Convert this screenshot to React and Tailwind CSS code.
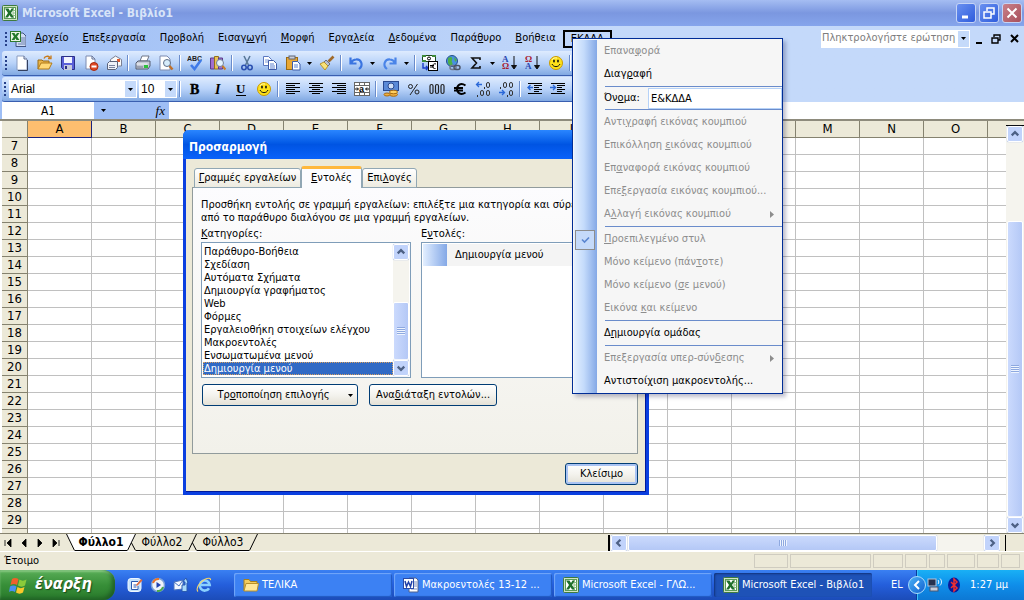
import React from "react";

/* Text with an underlined access key: the letter after "_" is underlined. */
function Key({ t }) {
  const i = t.indexOf("_");
  if (i < 0) return <span>{t}</span>;
  return (
    <span>
      {t.slice(0, i)}
      <span className="underline underline-offset-1">{t[i + 1]}</span>
      {t.slice(i + 2)}
    </span>
  );
}

const ICONS = {
  new: (
    <>
      <path d="M3 1h7l3 3v11H3z" fill="#fff" stroke="#8a9cc0" />
      <path d="M10 1v3h3" fill="#dfe8f8" stroke="#5a6a90" />
      <path d="M13.5 5v10.5H4" fill="none" stroke="#33405f" />
    </>
  ),
  open: (
    <>
      <path d="M1 14V5h4l1 1h6v3" fill="#e9b54a" stroke="#9a6a14" />
      <path d="M1 14l3-6h11l-3 6z" fill="#ffd977" stroke="#b07a1a" />
      <path d="M7 3.500c1-2.500 4-3 6-1M14 0.500v3h-3" fill="none" stroke="#c87a1a" strokeWidth="1.300" />
    </>
  ),
  save: (
    <>
      <path d="M1.500 1.500h13v13h-11l-2-2z" fill="#5a5fd8" stroke="#2b2f86" />
      <rect x="4" y="2" width="8" height="6" fill="#f2f4ff" />
      <rect x="4" y="10" width="8" height="5" fill="#c7cbdc" />
      <rect x="5" y="11" width="2" height="3" fill="#2b2f86" />
    </>
  ),
  perm: (
    <>
      <path d="M3 1h6l3 3v10H3z" fill="#fff" stroke="#7d8bb0" />
      <path d="M9 1v3h3" fill="none" stroke="#5a6a90" />
      <circle cx="11" cy="11.500" r="4" fill="#e04a26" stroke="#a82a10" />
      <rect x="8.500" y="10.500" width="5" height="2" fill="#fff" />
    </>
  ),
  mail: (
    <>
      <path d="M4.500 15V4.500l5-3.500 6 3.500V11h-3" fill="#fafafa" stroke="#7a7f92" />
      <path d="M11 4h3v3h-3z" fill="#e0562a" />
      <path d="M1.500 8.500l2-2h8v6l-2 2h-8z" fill="#eef1f8" stroke="#5b637a" />
      <path d="M3 10.500h6M3 12.500h6" stroke="#7a84a0" />
    </>
  ),
  print: (
    <>
      <path d="M5 6l2-5h7l-2 5z" fill="#fff" stroke="#6f7688" />
      <path d="M1 8l2-2h12v5l-2 3H1z" fill="#c3c8d4" stroke="#555c6e" />
      <path d="M1.500 9h11" stroke="#f7f8fb" />
      <rect x="9" y="10" width="4" height="3" fill="#2dc03a" />
      <path d="M2 12h6" stroke="#70778a" />
    </>
  ),
  preview: (
    <>
      <path d="M2 1h7l3 3v11H2z" fill="#fff" stroke="#7d8bb0" />
      <circle cx="9" cy="8" r="3.500" fill="#d6ecfb" stroke="#5f6f88" />
      <path d="M11.500 11l3 3.500" stroke="#c0702a" strokeWidth="2.400" />
    </>
  ),
  spell: (
    <>
      <text x="0" y="6" fontSize="7" fontWeight="700" fontFamily="Liberation Sans, sans-serif" fill="#222">ABC</text>
      <path d="M4 10l3.500 4L14 5" fill="none" stroke="#3f7ae8" strokeWidth="2.600" />
    </>
  ),
  research: (
    <>
      <path d="M0.500 3h4v11h-4z" fill="#a070d0" stroke="#5c3a8a" />
      <path d="M4.500 1.500h4v12.500h-4z" fill="#e9c35a" stroke="#94721a" />
      <path d="M8.500 3h4v11h-4z" fill="#a070d0" stroke="#5c3a8a" />
      <circle cx="10" cy="8" r="3.500" fill="#e3f2fd" stroke="#6f7f98" />
      <path d="M12.500 11l3 3.500" stroke="#c9802a" strokeWidth="2.200" />
    </>
  ),
  cut: (
    <>
      <path d="M5 1l4.500 9M11 1L6.500 10" stroke="#5b7a9a" strokeWidth="1.600" fill="none" />
      <circle cx="5" cy="12.500" r="2.200" fill="none" stroke="#2b50b0" strokeWidth="1.600" />
      <circle cx="11" cy="12.500" r="2.200" fill="none" stroke="#2b50b0" strokeWidth="1.600" />
    </>
  ),
  copy: (
    <>
      <path d="M1.500 1.500h5l3 3v6h-8z" fill="#fff" stroke="#5c78c0" />
      <path d="M3 5h4M3 7h4" stroke="#7c98d8" />
      <path d="M6.500 5.500h5l3 3v6h-8z" fill="#fff" stroke="#3f5ca8" />
      <path d="M8 9h4M8 11h5M8 13h5" stroke="#5c80d0" />
    </>
  ),
  paste: (
    <>
      <rect x="1.500" y="2.500" width="11" height="12" fill="#e8a735" stroke="#9a6a14" />
      <rect x="4" y="1" width="6" height="3" fill="#c9cdd8" stroke="#5e6474" />
      <path d="M7.500 6.500h5l2.500 2.500v6H7.500z" fill="#fff" stroke="#3f5ca8" />
      <path d="M9 10h4M9 12h4" stroke="#5c80d0" />
    </>
  ),
  brush: (
    <>
      <path d="M14.500 1.500l-5 5" stroke="#a06a2a" strokeWidth="2.600" />
      <path d="M7 5l4 4-2 2-4-4z" fill="#b9bfd0" stroke="#6a7085" />
      <path d="M5 7l4 4-3 4L1 9z" fill="#f8e27a" stroke="#b8922a" />
    </>
  ),
  undo: <path d="M11 14c5-4 2-10-3-9.500C5.500 4.500 4 6 3 8M2.500 2.500V8.500h6" fill="none" stroke="#3a74e0" strokeWidth="2.200" />,
  redo: <path d="M5 14C0 10 3 4 8 4.500c2.500 0 4 1.500 5 3.500M13.500 2.500V8.500h-6" fill="none" stroke="#4a84e8" strokeWidth="2.200" />,
  euroconv: (
    <>
      <rect x="0.500" y="0.500" width="13" height="6" fill="#fff" stroke="#1c4a1c" />
      <path d="M0 0h4v2H0zM10 0h4v2h-4zM0 5h4v2H0z" fill="#3f8a3a" />
      <circle cx="7" cy="3.500" r="1.500" fill="none" stroke="#000" />
      <path d="M1 8v5h4M4 11l2 2-2 2" stroke="#1a3cc8" fill="none" strokeWidth="1.400" />
      <rect x="6.500" y="6.500" width="9" height="9" fill="#fff" stroke="#000" />
      <path d="M14 9c-4-1.500-5 5-0.500 4.500M8 10.500h4M8 12h4" stroke="#000" fill="none" />
    </>
  ),
  link: (
    <>
      <circle cx="7" cy="6" r="5.500" fill="#4a90e0" stroke="#24508a" />
      <path d="M3 3c3-2 5-1 4 2s2 3 0 5-4-1-4-3zM9 2l3 3-2 2z" fill="#4cb04a" />
      <rect x="5" y="10.500" width="6" height="4" rx="2" fill="none" stroke="#70788c" strokeWidth="1.500" />
      <rect x="9" y="10.500" width="6" height="4" rx="2" fill="none" stroke="#4c5468" strokeWidth="1.500" />
    </>
  ),
  sum: <path d="M12 5V3H4l4.500 5L4 13h8v-2" fill="none" stroke="#111" strokeWidth="1.600" />,
  sortasc: (
    <>
      <text x="0" y="7" fontSize="9" fontWeight="700" fontFamily="Liberation Serif, serif" fill="#2a48b0">A</text>
      <text x="0" y="14" fontSize="9" fontWeight="700" fontFamily="Liberation Serif, serif" fill="#a82030">Ω</text>
      <path d="M12 1v12M9.500 10.500L12 14l2.500-3.500z" stroke="#111" fill="#111" />
    </>
  ),
  sortdesc: (
    <>
      <text x="0" y="7" fontSize="9" fontWeight="700" fontFamily="Liberation Serif, serif" fill="#a82030">Ω</text>
      <text x="0" y="14" fontSize="9" fontWeight="700" fontFamily="Liberation Serif, serif" fill="#2a48b0">A</text>
      <path d="M12 1v12M9.500 10.500L12 14l2.500-3.500z" stroke="#111" fill="#111" />
    </>
  ),
  smile: (
    <>
      <circle cx="8" cy="8" r="6.500" fill="#ffe21a" stroke="#c99a00" />
      <path d="M4 5c1-2 3-2.500 5-2" stroke="#fff9b0" fill="none" />
      <ellipse cx="6" cy="6" rx="0.900" ry="1.500" fill="#111" />
      <ellipse cx="10" cy="6" rx="0.900" ry="1.500" fill="#111" />
      <path d="M4 9c1.500 3.500 6.500 3.500 8 0" fill="none" stroke="#111" />
    </>
  ),
  bold: <text x="3" y="13" fontSize="14" fontWeight="700" fontFamily="Liberation Serif, serif" stroke="#000" strokeWidth="0.400">B</text>,
  italic: <text x="5" y="13" fontSize="14" fontWeight="700" fontStyle="italic" fontFamily="Liberation Serif, serif">I</text>,
  under: (
    <>
      <text x="3" y="12" fontSize="13" fontWeight="700" fontFamily="Liberation Serif, serif">U</text>
      <path d="M3 14.500h10" stroke="#000" />
    </>
  ),
  left: <path d="M1 2.500h14M1 4.500h9M1 6.500h14M1 8.500h9M1 10.500h14M1 12.500h9" stroke="#000" />,
  center: <path d="M1 2.500h14M4 4.500h8M1 6.500h14M4 8.500h8M1 10.500h14M4 12.500h8" stroke="#000" />,
  right: <path d="M1 2.500h14M6 4.500h9M1 6.500h14M6 8.500h9M1 10.500h14M6 12.500h9" stroke="#000" />,
  merge: (
    <>
      <rect x="0.500" y="1.500" width="15" height="13" fill="#fff" stroke="#666" />
      <path d="M0 4.500h16M0 11.500h16M5.500 1v3M10.500 1v3M5.500 12v3M10.500 12v3" stroke="#666" />
      <path d="M1 8h3M15 8h-3M3 6.500L4.500 8 3 9.500M13 6.500L11.500 8 13 9.500" stroke="#000" fill="none" />
      <text x="5" y="10.500" fontSize="9" fontWeight="700" fontFamily="Liberation Sans, sans-serif">a</text>
    </>
  ),
  currency: (
    <>
      <rect x="0.500" y="0.500" width="15" height="9" fill="#5a8ad8" stroke="#2a4a90" />
      <circle cx="8" cy="5" r="3" fill="#cfe0f8" stroke="#2a4a90" />
      <ellipse cx="10.500" cy="13.500" rx="4" ry="1.800" fill="#f0b040" stroke="#a86a10" />
      <ellipse cx="10.500" cy="11" rx="4" ry="1.800" fill="#ffd060" stroke="#a86a10" />
      <ellipse cx="4" cy="13.500" rx="3" ry="1.500" fill="#f0b040" stroke="#a86a10" />
    </>
  ),
  percent: (
    <>
      <circle cx="4.500" cy="5.500" r="2" fill="none" stroke="#222" />
      <circle cx="11" cy="11" r="2" fill="none" stroke="#222" />
      <path d="M11.500 3l-7.500 11" stroke="#222" />
    </>
  ),
  thousands: (
    <g fill="none" stroke="#222" strokeWidth="1.200">
      <rect x="1" y="3.500" width="3" height="9" rx="1.500" />
      <rect x="6.500" y="3.500" width="3" height="9" rx="1.500" />
      <rect x="12" y="3.500" width="3" height="9" rx="1.500" />
    </g>
  ),
  euro: <path d="M13.500 4.500c-5-3.500-8.500 0-8.500 3.500s3.500 7 8.500 3.500M2 7h9M2 9.500h9" fill="none" stroke="#000" strokeWidth="2" />,
  incdec: (
    <>
      <path d="M7 3.500H2M4 1L1.500 3.500 4 6" fill="none" stroke="#2a68d8" strokeWidth="1.300" />
      <g fill="none" stroke="#333"><path d="M9.500 6v2" /><rect x="11.500" y="1.500" width="3" height="5" rx="1.500" /><path d="M2.500 14v2" /><rect x="5.500" y="9.500" width="3" height="5" rx="1.500" /><rect x="11.500" y="9.500" width="3" height="5" rx="1.500" /></g>
    </>
  ),
  decdec: (
    <>
      <path d="M1 11.500h5M4 9l2.500 2.500L4 14" fill="none" stroke="#2a68d8" strokeWidth="1.300" />
      <g fill="none" stroke="#333"><path d="M2.500 6v2" /><rect x="5.500" y="1.500" width="3" height="5" rx="1.500" /><rect x="11.500" y="1.500" width="3" height="5" rx="1.500" /><path d="M9.500 14v2" /><rect x="11.500" y="9.500" width="3" height="5" rx="1.500" /></g>
    </>
  ),
  outdent: (
    <>
      <path d="M1 2.500h14M7 4.500h8M7 6.500h5M7 8.500h8M7 10.500h5M1 12.500h14" stroke="#000" />
      <path d="M6 6.500H1M3.500 4L1 6.500 3.500 9" fill="none" stroke="#2a68d8" strokeWidth="1.400" />
    </>
  ),
  indent: (
    <>
      <path d="M1 2.500h14M7 4.500h8M7 6.500h5M7 8.500h8M7 10.500h5M1 12.500h14" stroke="#000" />
      <path d="M0 6.500h5M3 4l2.500 2.500L3 9" fill="none" stroke="#2a68d8" strokeWidth="1.400" />
    </>
  ),
  excel: (
    <>
      <rect x="0.500" y="0.500" width="15" height="15" rx="1" fill="#cfe3c2" stroke="#3f7a3f" />
      <rect x="2.500" y="2.500" width="11" height="11" fill="#fff" stroke="#5a9a55" />
      <path d="M11 3v10M11 5.500h2.500M11 8h2.500M11 10.500h2.500" stroke="#8cbf84" />
      <path d="M3 3.500h3.500L8 6l1.500-2.500H12L9 8l3 4.500H9L7.500 10 6 12.500H3L6 8z" fill="#1f6f2a" />
    </>
  ),
  exceldoc: (
    <>
      <path d="M6 2h7l3 3v10.500H6z" fill="#cfdcf4" stroke="#3f5280" />
      <path d="M11 7h4M11 9h4M11 11h4M8 13h7" stroke="#6d80ad" />
      <rect x="0.500" y="0.500" width="10" height="10" fill="#e9f5e4" stroke="#2f7a2f" />
      <path d="M1.500 2h3l1 2 1.500-2H9.500L7 5.500l2.500 3.500h-3l-1-1.800L4.500 9h-3L4 5.500z" fill="#237a2a" />
    </>
  ),
  word: (
    <>
      <path d="M6 1h7l2 2v12H6z" fill="#fff" stroke="#4f6290" />
      <path d="M11 5h3M11 7h3M11 9h3M8 12h6" stroke="#7d90bd" />
      <rect x="0.500" y="1.500" width="10" height="10" fill="#fff" stroke="#2a4aa8" />
      <path d="M2 4l1.500 5.500L5.500 5l2 4.500L9 4" fill="none" stroke="#1f3fa8" strokeWidth="1.500" />
    </>
  ),
  folder: (
    <>
      <path d="M1 14V2.500h5l1.500 2H14V7" fill="#f2cc60" stroke="#a8801a" />
      <path d="M1 14L3 6.500h12.500L14 14z" fill="#ffe89a" stroke="#b8902a" />
    </>
  ),
  desktop: (
    <>
      <rect x="1" y="1.500" width="13" height="13" rx="3" fill="#c4e2fb" stroke="#eef7ff" />
      <path d="M11 4.500H4.500v8H11V9" fill="#fff" stroke="#2a5ab0" />
      <path d="M6.500 8h3M6.500 10h3" stroke="#2a5ab0" />
      <path d="M9 8l5-6 1.500 1.500L10 9z" fill="#e06a3a" />
    </>
  ),
  media: (
    <>
      <circle cx="8" cy="8" r="6.500" fill="#eef4fb" stroke="#7aa0d8" strokeWidth="1.500" />
      <path d="M3 6a6 6 0 0 1 6-4" stroke="#e8732a" strokeWidth="2" fill="none" />
      <path d="M13 10a6 6 0 0 1-6 4" stroke="#4aa84a" strokeWidth="2" fill="none" />
      <path d="M6.500 5v6l4.500-3z" fill="#1f3fb0" />
    </>
  ),
  outlook: (
    <>
      <path d="M1 5l9-2v9l-9 1z" fill="#f2f7ff" stroke="#4a74c0" />
      <path d="M1 5l5 4 4-6" fill="none" stroke="#4a74c0" />
      <path d="M9 14.500V8h3V5l-2-.5L13 1l2 4.500L14 6v8.500z" fill="#a8d8fa" stroke="#2a5ab0" />
    </>
  ),
  ie: (
    <>
      <path d="M13 11.200a5 5 0 1 1 .7-3.200H4.500" fill="none" stroke="#8ad0ff" strokeWidth="2.600" />
      <path d="M2 14.500C-.5 12 3 5 9 2.200c3-1.400 6-1.500 5.500 1" fill="none" stroke="#f8d468" strokeWidth="1.100" />
    </>
  ),
  net: (
    <>
      <rect x="1" y="2" width="8" height="7" fill="#26324f" stroke="#b8c4da" />
      <rect x="3" y="10" width="8" height="4" fill="#c8cfdc" stroke="#4b5670" />
      <path d="M11 3c1 1 1 3 0 4M13 1.500c2 2 2 5 0 7" fill="none" stroke="#e8f6ff" />
    </>
  ),
  bt: (
    <>
      <ellipse cx="8" cy="8" rx="6" ry="7.500" fill="#0a1a9a" />
      <path d="M5 5l6 6-3 3V2l3 3-6 6" fill="none" stroke="#f03030" strokeWidth="1.500" />
    </>
  ),
};

function Icon({ n }) {
  return (
    <svg width="16" height="16" viewBox="0 0 16 16" className="block shrink-0" aria-hidden="true">
      {ICONS[n]}
    </svg>
  );
}

function Down({ className = "" }) {
  return (
    <svg width="5" height="3" viewBox="0 0 5 3" className={"block shrink-0 " + className} aria-hidden="true">
      <path d="M0 0h5L2.500 3z" fill="currentColor" />
    </svg>
  );
}

function Grip() {
  return (
    <svg width="4" height="16" viewBox="0 0 4 16" className="mr-[2px] shrink-0" aria-hidden="true">
      <path d="M1 1h2v2H1zM1 5h2v2H1zM1 9h2v2H1zM1 13h2v2H1z" fill="#27418a" />
    </svg>
  );
}

/* "|" is a separator, "v" a small drop-down arrow, anything else an icon. */
function Tools({ items }) {
  return items.map((n, i) => {
    if (n === "|") return <span key={i} className="mx-[2px] h-4 w-[2px] shrink-0 border-r border-white bg-[#6a8ccb]" />;
    if (n === "v")
      return (
        <button key={i} aria-label="Περισσότερα" className="flex h-[22px] w-[11px] shrink-0 items-center justify-center">
          <Down />
        </button>
      );
    return (
      <button key={i} aria-label={n} className="flex h-[22px] w-[23px] shrink-0 items-center justify-center">
        <Icon n={n} />
      </button>
    );
  });
}

function Combo({ label, value, className }) {
  return (
    <div className={"relative h-[18px] shrink-0 bg-white " + className}>
      <select aria-label={label} defaultValue={value} className="block h-full w-full appearance-none border border-white bg-white pl-px font-['Liberation_Sans',sans-serif] text-xs leading-4 outline-none">
        <option>{value}</option>
      </select>
      <span className="pointer-events-none absolute inset-y-px right-px flex w-[11px] items-center justify-center bg-[#c5dafa]">
        <Down />
      </span>
    </div>
  );
}

const BAR = "flex h-[25px] w-[700px] max-w-full items-center overflow-hidden rounded-l-[3px] border-b border-[#3a5fb0] bg-linear-to-b from-[#deebfe] via-[#b9d3f9] to-[#81a9e2]";

const STANDARD = "new open save perm mail | print preview | spell research | cut copy paste v brush | undo v redo v | euroconv link sum v sortasc sortdesc smile |".split(" ");
const FORMAT = "| bold italic under smile | left center right merge | currency percent thousands euro incdec decdec | outdent indent".split(" ");

const MENUS = ["_Αρχείο", "_Επεξεργασία", "Π_ροβολή", "Εισαγ_ωγή", "_Μορφή", "Εργα_λεία", "_Δεδομένα", "Παρά_θυρο", "_Βοήθεια"];

const COLS = "ABCDEFGHIJKLMNO".split("");
const ROWS = Array.from({ length: 23 }, (_, i) => i + 7);

function ScrollButton({ dir }) {
  const d = { up: "M4 9l3.500-3.500L11 9", down: "M4 6l3.500 3.500L11 6", left: "M9 4L5.500 7.500 9 11", right: "M6 4l3.500 3.500L6 11" }[dir];
  return (
    <button aria-label={dir} className="h-4 w-4 shrink-0 rounded-[2px] border border-white bg-[#c1d3fb] shadow-[0_0_1px_#7c9be0]">
      <svg width="14" height="14" viewBox="0 0 15 15" aria-hidden="true">
        <path d={d} fill="none" stroke="#4d6185" strokeWidth="2.400" />
      </svg>
    </button>
  );
}

function Sheet() {
  return (
    <section className="flex min-h-0 flex-1 border-t-2 border-[#8e8b7c] bg-white pl-[2px]">
      <div className="min-w-0 flex-1 overflow-hidden">
        <table className="w-full table-fixed border-separate border-spacing-0 text-[13px]">
          <thead>
            <tr className="h-[17px]">
              <th className="h-[17px] w-[26px] border-r border-b border-[#85826f] bg-[#ece9d8] p-0" aria-label="Γωνία" />
              {COLS.map((c) => (
                <th
                  key={c}
                  className={
                    "h-[17px] w-16 border-r border-b p-0 leading-4 font-normal " +
                    (c === "A" ? "border-[#1a237e] bg-[#fdbe6f]" : "border-[#85826f] bg-[#ece9d8]")
                  }
                >
                  {c}
                </th>
              ))}
              <th className="border-b border-[#85826f] bg-[#ece9d8] p-0" aria-label="P" />
            </tr>
          </thead>
          <tbody>
            {ROWS.map((r) => (
              <tr key={r} className="h-[17px]">
                <th className="h-[17px] border-r border-b border-[#85826f] bg-[#ece9d8] p-0 leading-4 font-normal">{r}</th>
                {COLS.map((c) => (
                  <td key={c} className="h-[17px] border-r border-b border-[#c0c0c0] p-0" />
                ))}
                <td className="border-b border-[#c0c0c0] p-0" />
              </tr>
            ))}
            <tr className="h-[17px]">
              <th className="border-r border-[#85826f] bg-[#ece9d8] p-0" aria-label="30" />
              {COLS.map((c) => (
                <td key={c} className="border-r border-[#c0c0c0] p-0" />
              ))}
              <td className="p-0" />
            </tr>
          </tbody>
        </table>
      </div>
      <div className="flex w-[18px] shrink-0 flex-col items-center bg-[#f5f4ee]">
        <div className="h-[5px] w-full shrink-0 border-b border-black bg-[#ece9d8]" />
        <ScrollButton dir="up" />
        <div className="h-[79px] shrink-0" />
        <div className="flex w-4 flex-1 items-center justify-center rounded-[2px] border border-white bg-linear-to-r from-[#cbdafd] to-[#b4c8f6]">
          <span className="h-2 w-2 bg-[repeating-linear-gradient(#8ea9e0_0_1px,#eef4fe_1px_2px)]" />
        </div>
        <ScrollButton dir="down" />
      </div>
    </section>
  );
}

function Slash({ left }) {
  return (
    <svg width="9" height="17" viewBox="0 0 9 17" className="block shrink-0" aria-hidden="true">
      {left && <path d="M0 0h9L1 17H0z" fill={left} />}
      <path d="M8.500 0L0.500 16.500M4.500 9L8.500 16.500" stroke="#000" fill="none" />
    </svg>
  );
}

function SheetTabs() {
  const nav = ["M2 2v6M8 1v8L4 5z", "M7 1v8L3 5z", "M3 1v8l4-4z", "M8 2v6M2 1v8l4-4z"];
  return (
    <div className="flex h-[18px] shrink-0 items-center border-t border-[#85826f] bg-[#ece9d8] pr-[18px]">
      {nav.map((d, i) => (
        <button key={i} aria-label={"Φύλλα " + (i + 1)} className="flex h-4 w-4 shrink-0 items-center justify-center">
          <svg width="10" height="10" viewBox="0 0 10 10" aria-hidden="true">
            <path d={d} fill="#000" stroke="#000" strokeWidth="0.800" />
          </svg>
        </button>
      ))}
      <svg width="9" height="17" viewBox="0 0 9 17" className="ml-[2px] block shrink-0" aria-hidden="true">
        <path d="M0 0h9v17z" fill="#fff" />
        <path d="M0.500 0L8.500 16.500" stroke="#000" />
      </svg>
      <button className="h-[17px] w-[52px] border-b border-black bg-white text-[12px] leading-4 font-bold whitespace-nowrap">Φύλλο1</button>
      <Slash left="#fff" />
      <button className="h-[17px] w-[52px] border-b border-black text-[12px] leading-4 whitespace-nowrap">Φύλλο2</button>
      <Slash />
      <button className="h-[17px] w-[52px] border-b border-black text-[12px] leading-4 whitespace-nowrap">Φύλλο3</button>
      <svg width="9" height="17" viewBox="0 0 9 17" className="block shrink-0" aria-hidden="true">
        <path d="M8.500 0L0.500 16.500" stroke="#000" />
      </svg>
      <div className="flex-1" />
      <div className="flex h-4 w-2/5 items-center bg-[#f5f4ee]">
        <span className="mr-px h-4 w-[6px] border-r-2 border-black bg-[#ece9d8]" />
        <ScrollButton dir="left" />
        <div className="ml-px flex h-4 w-[77%] items-center justify-center rounded-[2px] border border-white bg-linear-to-b from-[#cbdafd] to-[#b4c8f6] shadow-[0_0_1px_#7c9be0]">
          <span className="h-[6px] w-2 bg-[repeating-linear-gradient(90deg,#8ea9e0_0_1px,#eef4fe_1px_2px)]" />
        </div>
        <div className="flex-1" />
        <ScrollButton dir="right" />
        <span className="h-4 w-[6px] border-r border-black bg-[#ece9d8]" />
      </div>
    </div>
  );
}

const CATEGORIES = [
  "Παράθυρο-Βοήθεια", "Σχεδίαση", "Αυτόματα Σχήματα", "Δημιουργία γραφήματος", "Web",
  "Φόρμες", "Εργαλειοθήκη στοιχείων ελέγχου", "Μακροεντολές", "Ενσωματωμένα μενού", "Δημιουργία μενού",
];

const XPBTN = "flex h-[22px] items-center justify-center rounded-[3px] border border-[#003c74] bg-linear-to-b from-white via-[#f4f3ee] to-[#e4e1d6] whitespace-nowrap";

function Dialog() {
  return (
    <div role="dialog" aria-label="Προσαρμογή" className="absolute top-[130px] left-[183px] w-[466px] rounded-t-md border-x-[3px] border-b-[3px] border-[#0a3fe0] bg-[#ece9d8] shadow-[inset_-1px_-1px_0_#001a9c]">
      <h2 className="-mx-[3px] flex h-[29px] items-center rounded-t-md bg-linear-to-b from-[#2a86ff] via-[#0054e3] to-[#0a62fa] pt-1 pl-[6px] text-xs font-bold text-white">
        Προσαρμογή
      </h2>
      <div className="pt-[7px] pr-2 pl-[6px]">
        <div role="tablist" className="relative z-10 -mb-px flex items-end">
          <button role="tab" className="ml-[2px] h-5 w-[107px] rounded-t-[3px] border border-[#91a7b4] bg-linear-to-b from-white to-[#edebe0]"><Key t="_Γραμμές εργαλείων" /></button>
          <button role="tab" aria-selected="true" className="h-[22px] w-[61px] rounded-t-[3px] border-x border-t-[3px] border-x-[#91a7b4] border-t-[#ffb83c] bg-[#fcfcfe]"><Key t="_Εντολές" /></button>
          <button role="tab" className="h-5 w-[55px] rounded-t-[3px] border border-[#91a7b4] bg-linear-to-b from-white to-[#edebe0]"><Key t="Επι_λογές" /></button>
        </div>
        <div role="tabpanel" className="h-[267px] border border-[#919b9c] bg-linear-to-b from-[#fcfcfe] to-[#f2f1ea] pt-[10px] pl-2">
          <p className="overflow-hidden leading-[13px] whitespace-nowrap">
            Προσθήκη εντολής σε γραμμή εργαλείων: επιλέξτε μια κατηγορία και σύρετε τ
            <br />
            από το παράθυρο διαλόγου σε μια γραμμή εργαλείων.
          </p>
          <div className="mt-[3px] grid grid-cols-[210px_1fr] gap-x-[10px] leading-[14px]">
            <div>
              <div id="cat"><Key t="_Κατηγορίες:" /></div>
              <div className="mt-px flex h-[136px] border border-[#7f9db9] bg-white p-px">
                <ul role="listbox" aria-labelledby="cat" className="flex-1 pt-px leading-[13px]">
                  {CATEGORIES.map((c, i) => (
                    <li
                      key={c}
                      role="option"
                      aria-selected={i === 9}
                      className={"h-[13px] pl-px whitespace-nowrap " + (i === 9 ? "bg-[#316ac5] text-white outline-1 -outline-offset-1 outline-dotted outline-[#d8a060]" : "")}
                    >
                      {c}
                    </li>
                  ))}
                </ul>
                <div className="flex w-4 flex-col bg-[#f5f4ee]">
                  <ScrollButton dir="up" />
                  <div className="h-[42px]" />
                  <div className="flex flex-1 items-center justify-center rounded-[2px] border border-white bg-linear-to-r from-[#cbdafd] to-[#b4c8f6]">
                    <span className="h-2 w-2 bg-[repeating-linear-gradient(#8ea9e0_0_1px,#eef4fe_1px_2px)]" />
                  </div>
                  <ScrollButton dir="down" />
                </div>
              </div>
            </div>
            <div>
              <div id="cmd"><Key t="Ε_ντολές:" /></div>
              <ul role="listbox" aria-labelledby="cmd" className="mt-px mr-2 h-[136px] border border-[#7f9db9] bg-white p-px">
                <li role="option" aria-selected="false" className="flex h-[22px] items-center bg-[#f4f4f4]">
                  <span className="h-full w-6 bg-linear-to-r from-[#e3efff] to-[#84a8e6]" />
                  <span className="pl-2">Δημιουργία μενού</span>
                </li>
              </ul>
            </div>
          </div>
          <div className="mt-[6px] flex gap-[11px] pl-px">
            <button className={XPBTN + " w-[156px] pl-[10px]"}>
              <Key t="Τρ_οποποίηση επιλογής" />
              <Down className="ml-[18px]" />
            </button>
            <button className={XPBTN + " w-[128px]"}><Key t="Ανα_διάταξη εντολών..." /></button>
          </div>
        </div>
        <div className="flex justify-end pt-[9px] pb-[7px]">
          <button className={XPBTN + " w-[73px] shadow-[inset_0_0_0_2px_#a9c3f3]"}>Κλείσιμο</button>
        </div>
      </div>
    </div>
  );
}

const POPUP = [
  ["Επανα_φορά", 0], ["Διαγ_ραφή", 1], null, "field", null,
  ["Αντι_γραφή εικόνας κουμπιού", 0], ["Επικόλληση _εικόνας κουμπιού", 0], ["Επ_αναφορά εικόνας κουμπιού", 0],
  ["Επε_ξεργασία εικόνας κουμπιού...", 0], ["Α_λλαγή εικόνας κουμπιού", 0, "sub"], null,
  ["_Προεπιλεγμένο στυλ", 0, "check"], ["Μόνο κείμενο (πάν_τοτε)", 0], ["Μόνο κείμενο (_σε μενού)", 0], ["Εικόνα _και κείμενο", 0], null,
  ["Δ_ημιουργία ομάδας", 1], null, ["Επεξεργασία υπερ-σύν_δεσης", 0, "sub"], ["Αντιστοί_χιση μακροεντολής...", 1],
];

function Popup() {
  return (
    <div role="menu" className="absolute top-[38px] left-[572px] w-[211px] border border-[#002d96] bg-[#f6f6f6] shadow-[3px_3px_4px_rgba(0,0,60,0.25)]">
      <div className="mt-px ml-px bg-[linear-gradient(to_right,#e3efff,#c4dbfb_10px,#84a8e6_23px,#f6f6f6_23px)]">
        {POPUP.map((p, i) => {
          if (p === null) return <div key={i} className="ml-[31px] h-[2px] border-t border-[#6a8ccb]" />;
          if (p === "field")
            return (
              <div key={i} className="flex h-[21px] items-center pl-[30px]">
                <label htmlFor="name" className="w-[44px]"><Key t="Όν_ομα:" /></label>
                <input id="name" defaultValue="Ε&ΚΔΔΑ" className="h-[21px] min-w-0 flex-1 border border-[#b6d2f8] bg-white pl-[2px] outline-none" />
              </div>
            );
          return (
            <button key={i} role="menuitem" className={"flex h-[23px] w-full items-center text-left whitespace-nowrap " + (p[1] ? "text-black" : "text-[#8d8d8d]")}>
              <span className="w-[30px] shrink-0">
                {p[2] === "check" && (
                  <span className="ml-px flex h-5 w-5 items-center justify-center border border-[#8d8d8d] bg-[#c5dafa]">
                    <svg width="9" height="8" viewBox="0 0 9 8" aria-hidden="true"><path d="M1 3.500l2.500 2.500L8 1.500" fill="none" stroke="#5b86d0" strokeWidth="1.600" /></svg>
                  </span>
                )}
              </span>
              <Key t={p[0]} />
              {p[2] === "sub" && (
                <svg width="4" height="7" viewBox="0 0 4 7" className="mr-2 ml-auto" aria-hidden="true"><path d="M0 0l4 3.500L0 7z" fill="#8d8d8d" /></svg>
              )}
            </button>
          );
        })}
      </div>
    </div>
  );
}

function WinBtn({ label, red, children }) {
  return (
    <button aria-label={label} className={"flex h-5 w-5 items-center justify-center rounded-[3px] border border-[#c5d4f6] " + (red ? "bg-linear-to-br from-[#c9808a] to-[#a8505c]" : "bg-linear-to-br from-[#6a90f0] to-[#2f5bdc]")}>
      <svg width="14" height="14" viewBox="0 0 14 14" fill="none" stroke="#fff" strokeWidth="2" aria-hidden="true">{children}</svg>
    </button>
  );
}

const TASKS = [["folder", "ΤΕΛΙΚΑ"], ["word", "Μακροεντολές 13-12 ..."], ["excel", "Microsoft Excel - ΓΛΩ..."], ["excel", "Microsoft Excel - Βιβλίο1"]];

function Taskbar() {
  return (
    <footer className="flex h-[30px] shrink-0 bg-linear-to-b from-[#3a80f2] via-[#245edb] to-[#1c4cb8] text-white">
      <button className="flex w-[115px] shrink-0 items-center rounded-r-xl bg-linear-to-b from-[#5aae58] via-[#378f38] to-[#2a7a2c] pl-[9px] shadow-[inset_-3px_-2px_4px_#1f5f24,inset_0_2px_2px_#8fd08a]">
        <svg width="20" height="18" viewBox="0 0 20 18" aria-hidden="true">
          <path d="M3 3c2-1.500 4-1.500 6.500 0L8 9C6 7.500 3.500 7.500 1.500 9z" fill="#f0602a" />
          <path d="M10.500 3.500c2 1.500 4.500 1.500 7 0L16 9.500c-2 1.500-5 1.500-7 0z" fill="#8acb3a" />
          <path d="M1 10.500C3 9 5.500 9 7.500 10.500L6 16c-2-1.500-4.500-1.500-6 0z" fill="#4a90f0" />
          <path d="M8.500 11c2 1.500 4.500 1.500 7 0L14 16.500c-2 1.500-5 1.500-7 0z" fill="#fbc82a" />
        </svg>
        <span className="pb-[2px] pl-[6px] text-base leading-5 font-bold italic [text-shadow:1px_1px_1px_#1a4a1a]">έναρξη</span>
      </button>
      <div className="flex w-[119px] shrink-0 items-center gap-[7px] pl-3">
        {["desktop", "media", "outlook", "ie"].map((n) => (
          <a key={n} href="#quick" aria-label={n}><Icon n={n} /></a>
        ))}
      </div>
      <div className="flex flex-1 gap-[2px] py-[3px]">
        {TASKS.map(([ic, t], i) => (
          <button key={t} className={"flex w-[158px] items-center gap-[3px] rounded-[2px] pl-[9px] whitespace-nowrap " + (i === 3 ? "bg-[#1e52b7] shadow-[inset_1px_1px_2px_#12337a]" : "bg-[#3c81f3] shadow-[inset_1px_1px_1px_#74a8fa,inset_-1px_-1px_1px_#2058c0]")}>
            <Icon n={ic} />
            {t}
          </button>
        ))}
      </div>
      <div className="flex w-[41px] shrink-0 items-center pl-4">EL</div>
      <div className="flex w-[108px] shrink-0 items-center border-l border-[#0a3c9a] bg-linear-to-b from-[#1ab0f5] via-[#0f8eea] to-[#0d78d4] shadow-[inset_1px_0_0_#3cc0f8]">
        <button aria-label="Εμφάνιση" className="-ml-[9px] flex h-[18px] w-[18px] items-center justify-center rounded-full border border-[#a8dcfa] bg-linear-to-br from-[#4ab0f5] to-[#1560d0]">
          <svg width="8" height="10" viewBox="0 0 8 10" aria-hidden="true"><path d="M6 1L2 5l4 4" fill="none" stroke="#fff" strokeWidth="2" /></svg>
        </button>
        <span className="flex gap-[3px] pl-px"><Icon n="net" /><Icon n="bt" /></span>
        <time className="mr-4 ml-auto whitespace-nowrap">1:27 μμ</time>
      </div>
    </footer>
  );
}

export default function App() {
  return (
    <div className="relative flex h-screen flex-col overflow-hidden bg-[#ece9d8] font-['DejaVu_Sans_Condensed','DejaVu_Sans',sans-serif] text-[11px] text-black">
      <header className="flex h-[26px] shrink-0 items-center gap-1 bg-linear-to-b from-[#a5bdf2] via-[#7b97e0] to-[#86a5ec] pr-[2px] pl-[2px]">
        <Icon n="excel" />
        <h1 className="flex-1 text-xs font-bold text-[#d8e4f8]">Microsoft Excel - Βιβλίο1</h1>
        <div className="flex gap-[3px]">
          <WinBtn label="Ελαχιστοποίηση"><path d="M3 11h6" strokeWidth="3" /></WinBtn>
          <WinBtn label="Επαναφορά"><path d="M5 5V2h7v6H9.500M2 6h7v6H2z" strokeWidth="1.500" /></WinBtn>
          <WinBtn label="Κλείσιμο" red><path d="M2.500 2.500l9 9M11.500 2.500l-9 9" /></WinBtn>
        </div>
      </header>
      <div className="shrink-0 bg-linear-to-r from-[#9ebef5] to-[#c4d9fa] to-60% pl-[2px]">
        <nav className="flex h-[25px] items-center pr-1 pl-[2px]">
          <Grip />
          <Icon n="exceldoc" />
          <div className="flex items-center pl-[2px]">
            {MENUS.map((m) => (
              <button key={m} className="px-[7px] whitespace-nowrap"><Key t={m} /></button>
            ))}
            <button className="h-[18px] w-[49px] border-2 border-black leading-[14px]">ΕΚΔΔΑ</button>
          </div>
          <div className="ml-auto flex h-[18px] w-[149px] shrink-0 bg-white">
            <input aria-label="Ερώτηση" placeholder="Πληκτρολογήστε ερώτηση" className="min-w-0 flex-1 pl-px outline-none placeholder:text-[#7d7d7d]" />
            <button aria-label="Άνοιγμα" className="my-px mr-px flex w-[11px] items-center justify-center bg-[#c5dafa]"><Down /></button>
          </div>
          <svg width="50" height="14" viewBox="0 0 50 14" className="shrink-0" fill="none" stroke="#000" strokeWidth="2" aria-hidden="true">
            <path d="M6 11h6" />
            <path d="M24 5V3h6v5h-2M22 6h6v5h-6z" strokeWidth="1.400" />
            <path d="M41 3l7 7M48 3l-7 7" />
          </svg>
        </nav>
        <div className={BAR + " pl-[2px]"}>
          <Grip />
          <Tools items={STANDARD} />
        </div>
        <div className={BAR + " mt-px pl-px"}>
          <Grip />
          <div className="flex gap-[2px]">
            <Combo label="Γραμματοσειρά" value="Arial" className="w-[128px]" />
            <Combo label="Μέγεθος" value="10" className="w-[38px]" />
          </div>
          <Tools items={FORMAT} />
        </div>
      </div>
      <div className="flex h-[17px] shrink-0 bg-[#9ebef5] pl-[2px]">
        <input aria-label="Πλαίσιο ονόματος" defaultValue="A1" className="w-[92px] bg-white text-center text-[12px] outline-none" />
        <div className="flex w-[75px] items-center justify-between pr-1 pl-[7px]">
          <Down />
          <span className="font-['Liberation_Serif',serif] text-[13px] italic">fx</span>
        </div>
        <input aria-label="Γραμμή τύπων" className="min-w-0 flex-1 bg-white outline-none" />
      </div>
      <Sheet />
      <SheetTabs />
      <div className="flex h-[19px] shrink-0 items-center gap-[2px] border-t border-white pr-1 pl-1">
        <span className="flex-1">Έτοιμο</span>
        {["w-[34px]", "w-[81px]", "w-[30px]", "w-[22px]", "w-[16px]", "w-[28px]", "w-[22px]", "w-[19px]"].map((w, i) => (
          <span key={i} className={"h-[14px] border border-[#cfccc0] " + w} />
        ))}
      </div>
      <Taskbar />
      <Dialog />
      <Popup />
    </div>
  );
}
